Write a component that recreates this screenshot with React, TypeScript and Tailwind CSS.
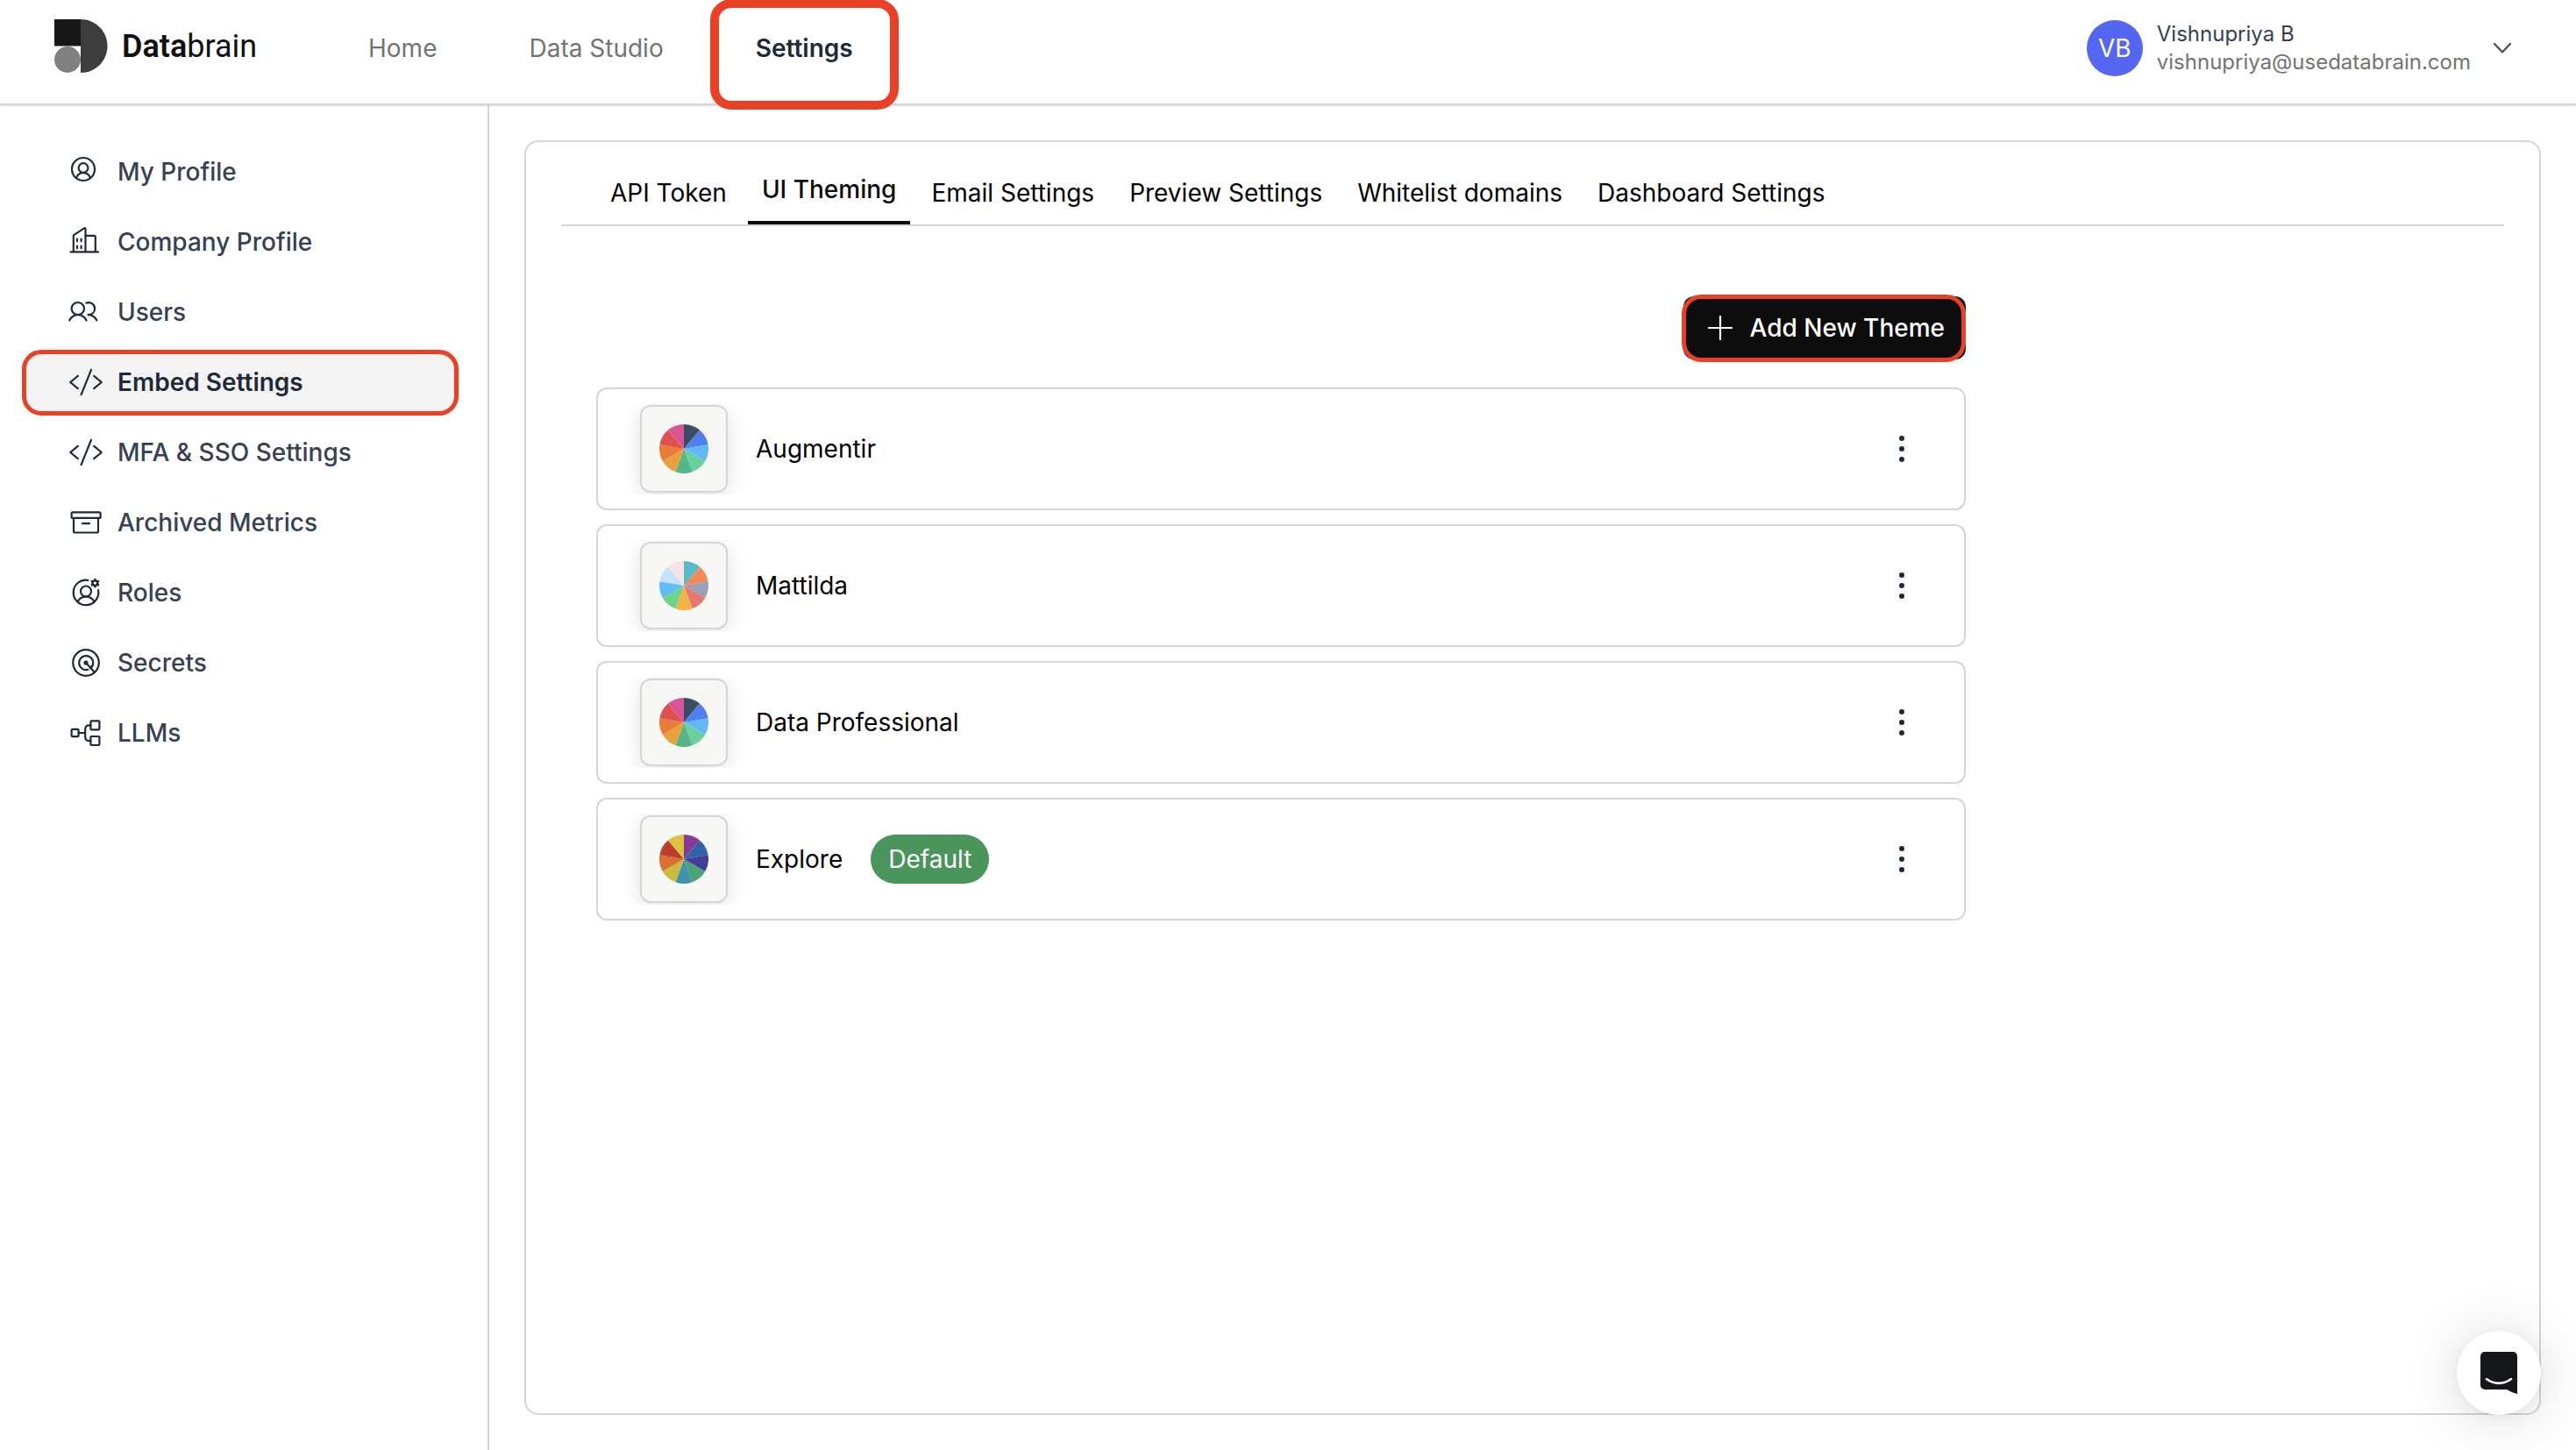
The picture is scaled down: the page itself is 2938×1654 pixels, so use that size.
import type { ReactNode } from "react";
import clsx from "clsx";

type NavItem = {
  label: string;
  icon: ReactNode;
  active?: boolean;
};

type Theme = {
  name: string;
  colors: string[];
  isDefault?: boolean;
};

const codeIcon = (
  <>
    <path d="M10.8 12.8 2.2 20l8.6 7.2M29.2 12.8l8.6 7.2-8.6 7.2" />
    <path d="M26 5.8 14.6 34.2" />
  </>
);

const sideItems: NavItem[] = [
  {
    label: "My Profile",
    icon: (
      <>
        <circle cx="17" cy="17" r="13" />
        <circle cx="17" cy="15.5" r="5.4" />
        <path d="M9 26.8c1.4-3.4 4.3-5.6 8-5.6s6.6 2.2 8 5.6" />
      </>
    ),
  },
  {
    label: "Company Profile",
    icon: (
      <>
        <path d="M2.5 31.4h31.5M5.8 31V12.4L18 4.4c.8-.5 1.5-.1 1.5.8V31" />
        <path d="M19.5 12.9h10c.8 0 1.3.5 1.3 1.3V31" />
        <path d="M10 16.6v2.6M14.6 16.6v2.6M10 24.6v2.6M14.6 24.6v2.6" />
      </>
    ),
  },
  {
    label: "Users",
    icon: (
      <>
        <ellipse cx="10.8" cy="16" rx="7.2" ry="7" />
        <path d="M1.2 29.4c2-3.8 5.4-6.2 9.6-6.2s7.8 2.4 9.8 6.2" />
        <path d="M20.4 9.6c5-1.6 9.7 1.6 9.7 6.4 0 4-3 7-7.6 7.1 4.4 0 7.8 2.4 9.9 6.3" />
      </>
    ),
  },
  { label: "Embed Settings", icon: codeIcon, active: true },
  { label: "MFA & SSO Settings", icon: codeIcon },
  {
    label: "Archived Metrics",
    icon: (
      <>
        <rect x="3.6" y="8.3" width="33" height="6.6" rx="1.5" />
        <path d="M6 15v15c0 1 .6 1.5 1.5 1.5h25c.9 0 1.5-.5 1.5-1.5V15M16 21.2h8" />
      </>
    ),
  },
  {
    label: "Roles",
    icon: (
      <>
        <path d="M22.4 5.8A14.3 14.3 0 1 0 34 17" />
        <circle cx="20" cy="18.5" r="6" />
        <path d="M10.6 30.3c1.8-3.5 5.2-5.6 9.4-5.6s7.6 2.1 9.4 5.6" />
        <path d="m30.4 4.8 1.2 2.2 2.6-.1-1.4 2.2 1.4 2.2-2.6-.1-1.2 2.2-1.2-2.2-2.6.1L28 9.1l-1.4-2.2 2.6.1z" />
      </>
    ),
  },
  {
    label: "Secrets",
    icon: (
      <>
        <circle cx="20" cy="20" r="14.8" />
        <path d="M25.4 26.2a8 8 0 1 0-3 1.6" />
        <path d="M26.8 23.6a8 8 0 0 1-1.4 2.6" />
        <circle cx="20" cy="20" r="1.5" fill="currentColor" />
        <path d="m20 20 9.8 10.8" />
      </>
    ),
  },
  {
    label: "LLMs",
    icon: (
      <>
        <rect x="3.6" y="15.8" width="8" height="8.4" rx="1" />
        <rect x="25.4" y="6.3" width="10" height="10" rx="1" />
        <rect x="25.4" y="24" width="10" height="10" rx="1" />
        <path d="M11.6 20H19M25.4 11.3h-1.8c-3 0-4.4 1.5-4.4 4.5v8.8c0 3 1.4 4.5 4.4 4.5h1.8" />
      </>
    ),
  },
];

const tabs = [
  "API Token",
  "UI Theming",
  "Email Settings",
  "Preview Settings",
  "Whitelist domains",
  "Dashboard Settings",
];

const baseColors = [
  "#3a4d63",
  "#5080ee",
  "#62b8f4",
  "#6ad09f",
  "#56b687",
  "#e8a13c",
  "#e97c37",
  "#dc524d",
  "#da5397",
];

const themes: Theme[] = [
  { name: "Augmentir", colors: baseColors },
  {
    name: "Mattilda",
    colors: [
      "#58bbc8",
      "#f08a57",
      "#9ba0b4",
      "#e8786d",
      "#f3b146",
      "#6bd38a",
      "#62bbf6",
      "#c2e3fd",
      "#fae3e2",
    ],
  },
  { name: "Data Professional", colors: baseColors },
  {
    name: "Explore",
    colors: [
      "#863a92",
      "#3163a6",
      "#413d98",
      "#4ca276",
      "#4192ad",
      "#c8bd3f",
      "#dd7030",
      "#bb3d2d",
      "#dfc141",
    ],
    isDefault: true,
  },
];

function Pie({ colors }: { colors: string[] }) {
  const step = (2 * Math.PI) / colors.length;
  const point = (i: number) =>
    `${28 + 28 * Math.sin(i * step)} ${28 - 28 * Math.cos(i * step)}`;

  return (
    <svg viewBox="0 0 56 56" className="size-14" aria-hidden="true">
      {colors.map((color, i) => (
        <path
          key={i}
          d={`M28 28L${point(i)}A28 28 0 0 1 ${point(i + 1)}Z`}
          fill={color}
        />
      ))}
    </svg>
  );
}

function Header() {
  return (
    <header className="relative z-10 flex h-[120px] shrink-0 items-center border-b-2 border-gray-300 bg-white pr-[73px] pb-2 pl-[62px] shadow-sm">
      <a href="#" className="flex w-[358px] items-center gap-4 pb-1">
        <svg width="61" height="62" viewBox="0 0 61 62" aria-hidden="true">
          <path d="M30 0c17 0 30.500 13.500 30.500 30.500S47 61 30 61z" fill="#3d3d3d" />
          <path d="M0 0h30v30.500H0z" fill="#181818" />
          <circle cx="15" cy="46" r="15" fill="#808080" />
        </svg>
        <span className="font-['Roboto'] text-[36px] leading-10 font-semibold text-[#111111]">
          Data<span className="font-normal">brain</span>
        </span>
      </a>

      <nav className="flex items-center gap-[105px] leading-10 text-[#737373]">
        <a href="#">Home</a>
        <a href="#">Data Studio</a>
        <a href="#" className="relative font-semibold text-gray-800">
          Settings
          <span className="pointer-events-none absolute -inset-x-[52px] -top-9 -bottom-[50px] rounded-[24px] border-10 border-[#ea4025]" />
        </a>
      </nav>

      <button type="button" className="ml-auto flex items-center text-left">
        <span className="flex size-16 items-center justify-center rounded-full bg-[#5566f2] text-white">
          VB
        </span>
        <span className="ml-4 flex flex-col text-[24px] leading-8">
          <span className="text-gray-700">Vishnupriya B</span>
          <span className="text-[#737373]">vishnupriya@usedatabrain.com</span>
        </span>
        <svg
          width="22"
          height="14"
          viewBox="0 0 22 14"
          fill="none"
          stroke="#525252"
          strokeWidth="2.4"
          strokeLinecap="round"
          strokeLinejoin="round"
          className="ml-[25px]"
          aria-hidden="true"
        >
          <path d="m2 2 9 9.500L20 2" />
        </svg>
      </button>
    </header>
  );
}

function Sidebar() {
  return (
    <aside className="w-[558px] shrink-0 border-r-2 border-gray-300 pt-10 pr-8 pl-7">
      <nav className="flex flex-col gap-2">
        {sideItems.map((item) => (
          <a
            key={item.label}
            href="#"
            className={clsx(
              "relative flex h-[72px] items-center gap-4 rounded-2xl pl-[50px]",
              item.active
                ? "bg-[#f3f3f3] font-semibold text-gray-800"
                : "font-medium text-gray-700"
            )}
          >
            <svg
              viewBox="0 0 40 40"
              fill="none"
              stroke="currentColor"
              strokeWidth="2.2"
              strokeLinecap="round"
              strokeLinejoin="round"
              className="size-10 shrink-0 text-gray-800"
              aria-hidden="true"
            >
              {item.icon}
            </svg>
            {item.label}
            {item.active && (
              <span className="pointer-events-none absolute -top-px right-px -bottom-0.5 -left-[3px] rounded-[22px] border-5 border-[#ea4025]" />
            )}
          </a>
        ))}
      </nav>
    </aside>
  );
}

function ThemeCard({ theme }: { theme: Theme }) {
  return (
    <li className="flex h-[140px] items-center rounded-xl border-2 border-gray-300 pr-[55px] pl-8">
      {/* wrapper cuts off the swatch shadow */}
      <div className="overflow-hidden py-0.5 pr-6 pl-4">
        <div className="flex size-[100px] items-center justify-center rounded-xl border-2 border-gray-300 bg-[#f6f6f5] shadow-[0_4px_24px_rgba(0,0,0,0.12)]">
          <Pie colors={theme.colors} />
        </div>
      </div>
      <span className="ml-2">{theme.name}</span>
      {theme.isDefault && (
        <span className="ml-8 flex h-14 items-center rounded-full bg-[#4a955c] px-5 text-white">
          Default
        </span>
      )}
      <button
        type="button"
        aria-label={`${theme.name} options`}
        className="ml-auto flex w-8 flex-col items-center gap-1.5"
      >
        <span className="size-1.5 rounded-full bg-gray-800" />
        <span className="size-1.5 rounded-full bg-gray-800" />
        <span className="size-1.5 rounded-full bg-gray-800" />
      </button>
    </li>
  );
}

export default function App() {
  return (
    <div className="flex min-h-screen flex-col bg-white font-['Inter',sans-serif] text-[28px] leading-10 text-black">
      <Header />

      <div className="flex flex-1">
        <Sidebar />

        <main className="flex min-w-0 flex-1 p-10">
          <section className="min-w-0 flex-1 rounded-2xl border-2 border-gray-300 p-10">
            {/* Tabs */}
            <div
              role="tablist"
              className="flex items-end gap-2 border-b-2 border-gray-300 pl-10 leading-7"
            >
              {tabs.map((tab) => (
                <button
                  key={tab}
                  type="button"
                  role="tab"
                  aria-selected={tab === "UI Theming"}
                  className={clsx(
                    "px-4 pb-[22px]",
                    tab === "UI Theming" &&
                      "border-b-4 border-[#0d0d0d] font-medium text-[#0d0d0d]"
                  )}
                >
                  {tab}
                </button>
              ))}
            </div>

            {/* Theme list */}
            <div className="ml-10 max-w-[1562px] pt-20">
              <div className="flex justify-end">
                <button
                  type="button"
                  className="relative flex h-[72px] items-center gap-5 rounded-xl bg-[#0d0d0d] pr-6 pl-7 font-medium text-white"
                >
                  <svg
                    width="28"
                    height="28"
                    viewBox="0 0 28 28"
                    stroke="currentColor"
                    strokeWidth="2.2"
                    strokeLinecap="round"
                    aria-hidden="true"
                  >
                    <path d="M14 1v26M1 14h26" />
                  </svg>
                  Add New Theme
                  <span className="pointer-events-none absolute -top-0.5 right-0 -bottom-[3px] -left-0.5 rounded-[22px] border-5 border-[#ea4025]" />
                </button>
              </div>

              <ul className="mt-8 flex flex-col gap-4">
                {themes.map((theme) => (
                  <ThemeCard key={theme.name} theme={theme} />
                ))}
              </ul>
            </div>
          </section>
        </main>
      </div>

      {/* Chat launcher */}
      <button
        type="button"
        aria-label="Open chat"
        className="fixed right-10 bottom-10 z-20 flex size-24 items-center justify-center rounded-full bg-white shadow-[0_2px_12px_rgba(0,0,0,0.06),0_4px_64px_rgba(0,0,0,0.16)]"
      >
        <svg width="42" height="48" viewBox="0 0 42 48" aria-hidden="true">
          <path
            d="M5 0h32a5 5 0 0 1 5 5v43c-5-1.400-9-3.200-12-5H5a5 5 0 0 1-5-5V5a5 5 0 0 1 5-5z"
            fill="#15171b"
          />
          <path
            d="M7 31c8.500 6.500 19.500 6.500 28 0"
            fill="none"
            stroke="#fff"
            strokeWidth="2.6"
            strokeLinecap="round"
          />
        </svg>
      </button>
    </div>
  );
}
